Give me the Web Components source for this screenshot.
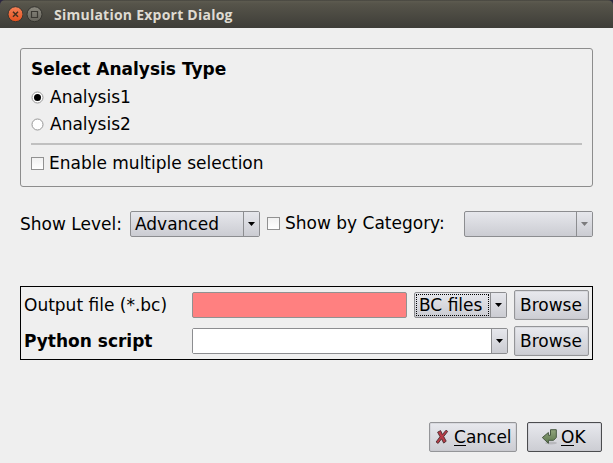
<!DOCTYPE html>
<html lang="en"><head><meta charset="utf-8"><title>Simulation Export Dialog</title>
<style>html,body{margin:0;width:613px;height:463px;overflow:hidden;background:#efefef}</style></head>
<body><export-dialog></export-dialog>
<script>
const define=(name,html)=>customElements.define(name,class extends HTMLElement{
  connectedCallback(){
    if(this.shadowRoot)return;
    const t=document.createElement('template');
    t.innerHTML='<style>*{box-sizing:border-box}:host{box-sizing:border-box}</style>'+html;
    this.attachShadow({mode:'open'}).append(t.content.cloneNode(true));
  }
});
define('title-bar',`<style>
:host{display:flex;height:28px;padding-left:7px;align-items:center;background:linear-gradient(#3c3b37 0,#5d5b50 1px,#56544a 4px,#3e3d38 100%);color:#dfdbd2;border-radius:5px 5px 0 0;font:bold 14px/28px "Open Sans","Noto Sans",sans-serif}
svg{display:block;margin-right:3px}span{margin-left:8px;padding-top:2px;white-space:nowrap;letter-spacing:.24px}
</style>
<svg width="16" height="18" viewBox="0 0 16 18"><defs><linearGradient id="r" x2="0" y2="1"><stop stop-color="#f58258"/><stop offset="1" stop-color="#e4501d"/></linearGradient></defs><circle cx="8.5" cy="9.2" r="7.5" fill="url(#r)" stroke="#383630"/><path d="M6 6.7l5 5m0-5l-5 5" stroke="#45301f" stroke-width="1.5"/></svg>
<svg width="17" height="18" viewBox="0 0 17 18"><defs><linearGradient id="g" x2="0" y2="1"><stop stop-color="#8b897f"/><stop offset="1" stop-color="#65635b"/></linearGradient></defs><circle cx="8.5" cy="9.2" r="7.5" fill="url(#g)" stroke="#35342f"/><path d="M5.5 6.5h6v6h-6z" fill="none" stroke="#3b3933" stroke-width="1.2"/></svg>
<span><slot></slot></span>`);
define('text-label',`<style>:host{display:block;white-space:nowrap;line-height:20px;height:20px}:host([bold]){font-weight:bold}</style><slot></slot>`);
define('check-option',`<style>:host{display:flex;align-items:center;gap:5px;height:20px;line-height:20px;white-space:nowrap}
i{flex:none;width:13px;height:13px;border:1px solid #919191;background:linear-gradient(#f1f1f1,#fff);margin-top:1px}</style><i></i><slot></slot>`);
define('radio-option',`<style>:host{display:flex;align-items:center;gap:6px;height:20px;line-height:20px;white-space:nowrap}
svg{flex:none}.dot{display:none}:host([checked]) .dot{display:block}</style>
<svg width="13" height="13"><circle cx="6.5" cy="6.5" r="5.5" fill="#fff" stroke="#969696"/><circle class="dot" cx="6.5" cy="6.5" r="3.5" fill="#000"/></svg><slot></slot>`);
define('combo-box',`<style>:host{display:flex;height:26px;border:1px solid #8c8d90;border-radius:2px;background:linear-gradient(#e6e7ec,#cbccd2);color:#000;line-height:24px;white-space:nowrap;--arrow:#000}
:host([disabled]){--arrow:#7b7b7d}
.v{flex:1;padding-left:4px}
.a{width:16px;border-left:1px solid #8c8d90;display:grid;place-items:center;background:linear-gradient(#e6e7ec,#cbccd2)}
:host([editable]) .v{background:#fff}
:host([focus]) .v{margin:1px;padding-left:2px;border:1px dotted #000;line-height:20px}
svg{display:block}</style><div class="v"><slot></slot></div><div class="a"><svg width="7" height="4"><path d="M0 0h7L3.5 4z" fill="var(--arrow)"/></svg></div>`);
define('line-field',`<style>:host{display:block;height:26px;border:1px solid #919191;border-radius:2px;background:#ff8080}</style>`);
define('push-button',`<style>:host{display:flex;height:30px;border:1px solid #949598;border-radius:2px;background:linear-gradient(#e8e9ee,#cccdd3);box-shadow:inset 0 0 0 1px #c3c4c966;line-height:28px;padding-left:5px;white-space:nowrap;align-items:center}
:host([default]){border-color:#4b4c4f}</style><slot name="icon"></slot><span><slot></slot></span>`);
define('mnemonic-char',`<style>:host{display:inline-block;line-height:16px;height:17px;border-bottom:1px solid #000}</style><slot></slot>`);
define('cancel-icon',`<style>:host{display:block;width:19px;height:16px}svg{display:block}</style><svg width="16" height="16"><path d="M2.6 3.2L5.6 1.6l1.8 3.9L11 1.2l1.7 1.2-4 5.2 2.5 4.6-2.5 1.9-2.2-4.3-3.4 4.6-2-1.4 3.9-5.3z" fill="#b83c47" stroke="#4c2d30" stroke-width=".9"/></svg>`);
define('ok-icon',`<style>:host{display:block;width:20px;height:16px}svg{display:block}</style><svg width="18" height="16"><defs><linearGradient id="g" x2="0" y2="1"><stop stop-color="#91a57d"/><stop offset="1" stop-color="#5c774d"/></linearGradient></defs><ellipse cx="10" cy="14" rx="6" ry="1.5" fill="#777" opacity=".3"/><path d="M9.5.7h5.8v7.8l-2.7 2.8H7.4v3L1.3 8.6 7.4 3.5v2.8h2.1z" fill="url(#g)" stroke="#475841"/></svg>`);
define('analysis-group',`<style>:host{display:block;height:139px;border:1px solid #8d8d8d;border-radius:3px;padding:10px 10px 0}
text-label{margin-bottom:8px}radio-option{margin-bottom:7px}hr{margin:9px 0 8px;border:0;height:2px;background:#c0c0c0}.l{margin-bottom:0}</style>
<text-label bold>Select Analysis Type</text-label><radio-option checked>Analysis1</radio-option><radio-option class="l">Analysis2</radio-option><hr><check-option>Enable multiple selection</check-option>`);
define('filter-row',`<style>:host{display:grid;grid-template-columns:110px 130px 7px 197px 129px;height:26px;align-items:center;margin-top:24px}check-option{grid-column:4;margin-bottom:2px}</style>
<text-label>Show Level:</text-label><combo-box>Advanced</combo-box><check-option>Show by Category:</check-option><combo-box disabled></combo-box>`);
define('file-panel',`<style>:host{display:grid;border:1px solid #000;height:74px;margin-top:49px;padding:3px 3px 0;gap:6px;align-content:start}
div{display:grid;height:30px;align-items:center;column-gap:6px;grid-template-columns:162px 316px 75px}
.f{height:26px;grid-template-columns:215px 93px;column-gap:7px}</style>
<div><text-label>Output file (*.bc)</text-label><div class="f"><line-field></line-field><combo-box focus>BC files</combo-box></div><push-button>Browse</push-button></div>
<div><text-label bold>Python script</text-label><combo-box editable></combo-box><push-button>Browse</push-button></div>`);
define('export-dialog',`<style>:host{display:block;width:613px;height:463px;background:linear-gradient(#2c2740,#2c2740) 0 0/613px 8px no-repeat,#efefef;color:#000;font:17px "DejaVu Sans",sans-serif}
main{padding:20px 20px 0}footer{display:flex;justify-content:flex-end;gap:10px;padding:62px 11px 0}
.c{width:88px}.o{width:75px;padding-left:13px}</style>
<title-bar>Simulation Export Dialog</title-bar><main><analysis-group></analysis-group><filter-row></filter-row><file-panel></file-panel></main>
<footer><push-button class="c"><cancel-icon slot="icon"></cancel-icon><mnemonic-char>C</mnemonic-char>ancel</push-button><push-button class="o" default><ok-icon slot="icon"></ok-icon><mnemonic-char>O</mnemonic-char>K</push-button></footer>`);
</script></body></html>
